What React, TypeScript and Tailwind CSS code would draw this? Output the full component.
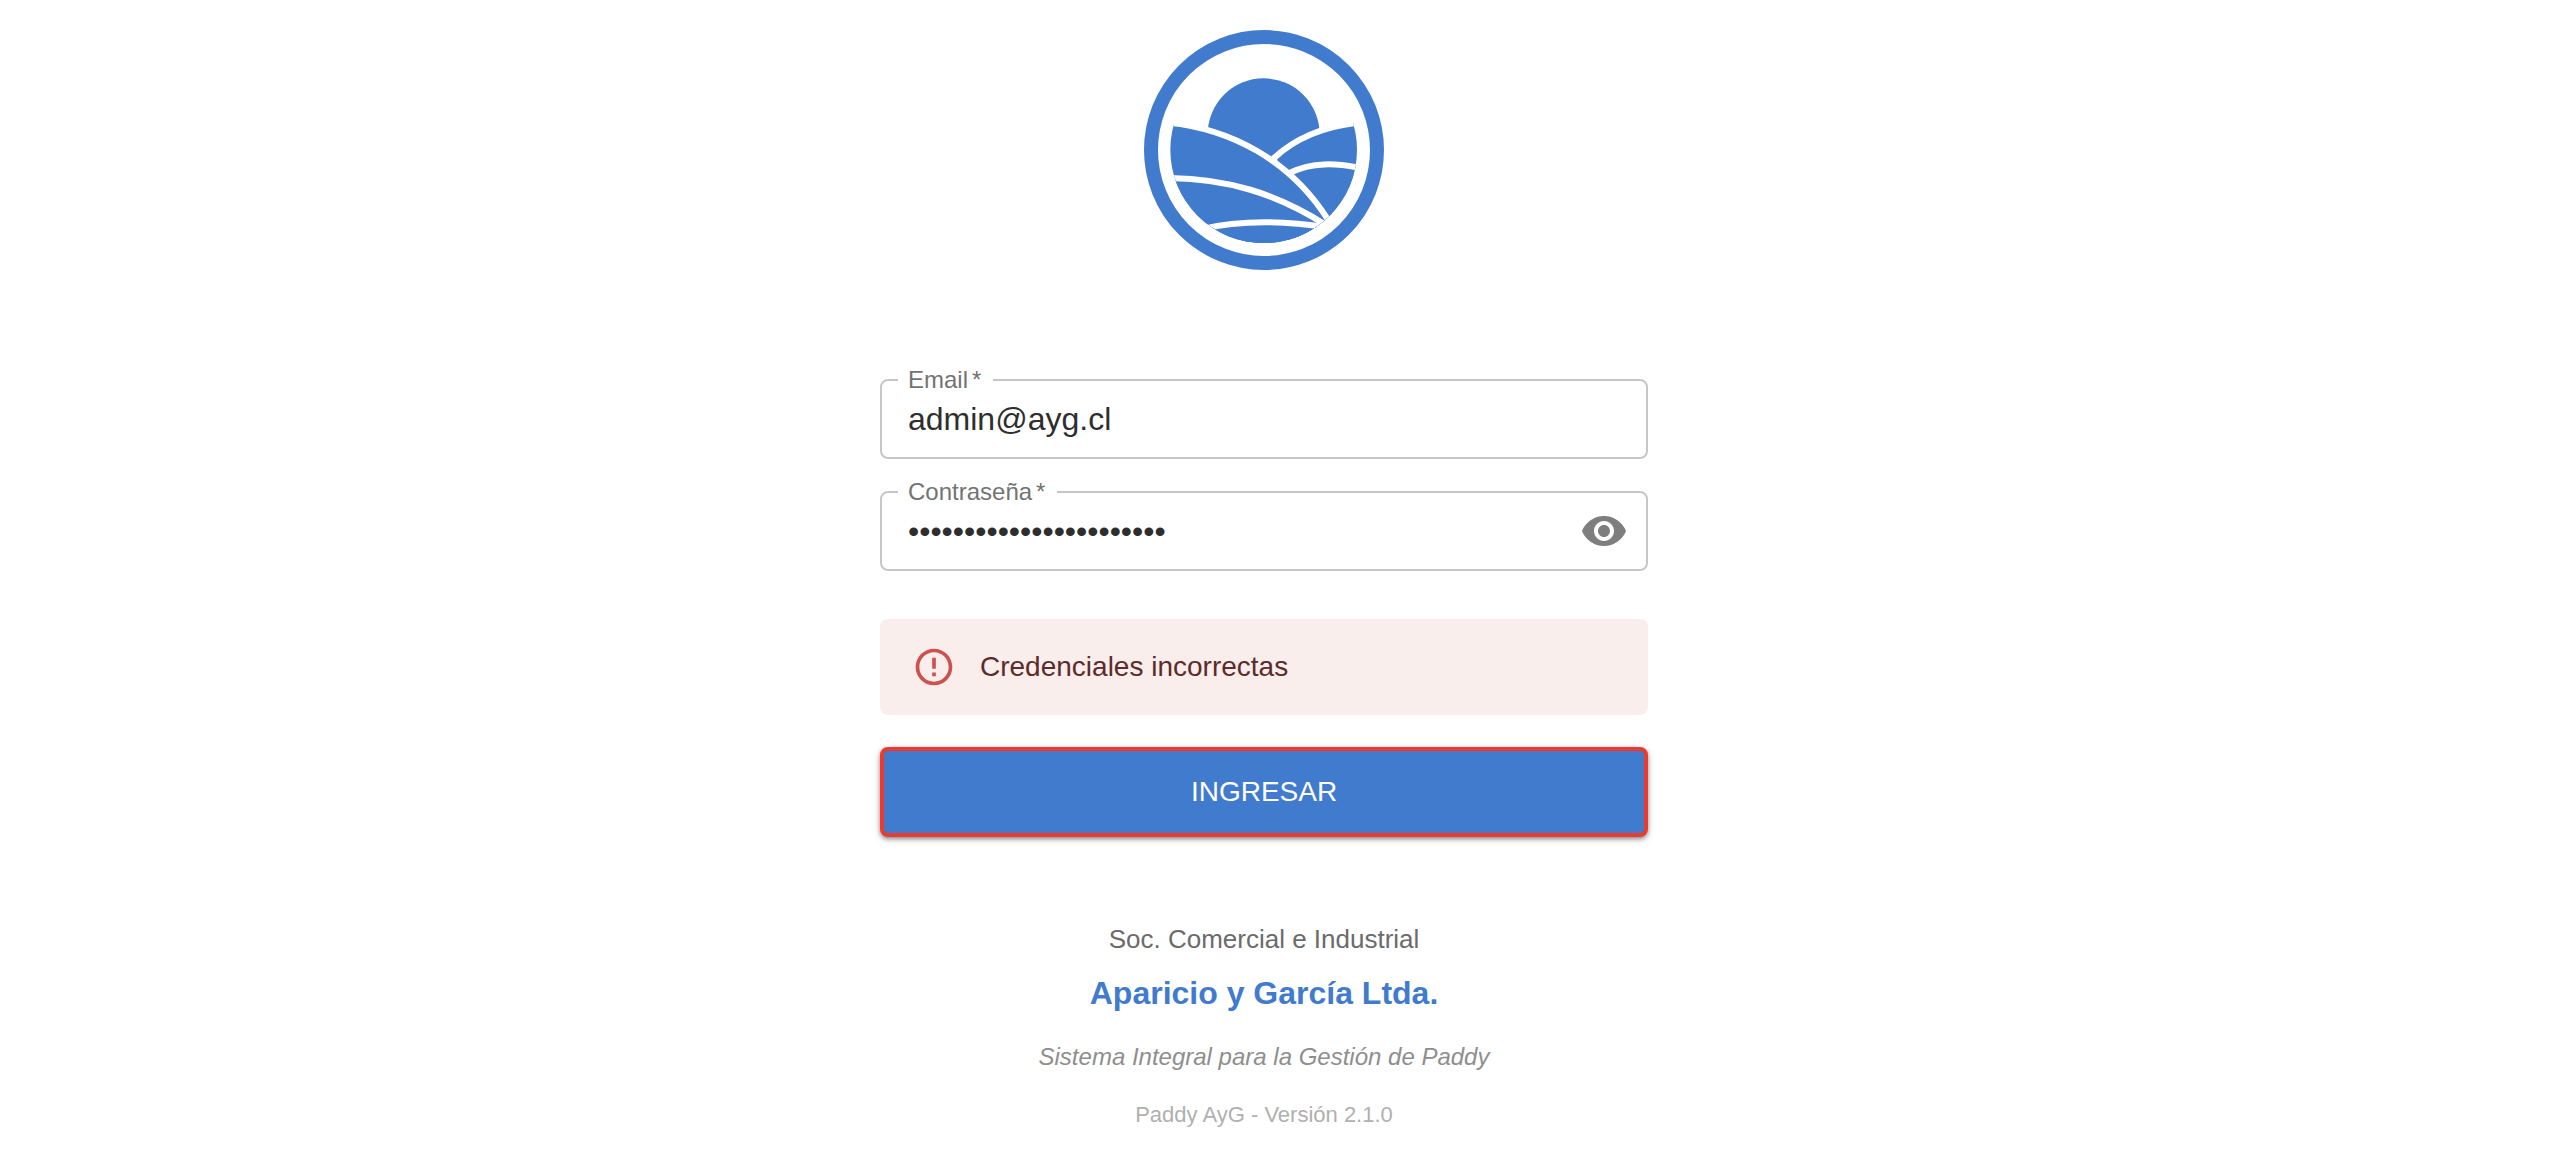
import { useState } from "react";
import type { ReactNode } from "react";

function Logo() {
  return (
    <svg viewBox="42 30 720 720" className="size-60" role="img" aria-label="Paddy AyG">
      <defs>
        <clipPath id="field">
          <circle cx="401" cy="389" r="280" />
        </clipPath>
      </defs>
      <circle cx="402" cy="390" r="339" fill="none" stroke="#417bce" strokeWidth="42" />
      <g clipPath="url(#field)" fill="#417bce" stroke="#fff" strokeWidth="18">
        <circle cx="401" cy="343" r="168" stroke="none" />
        <path d="M432 414C500 350 585 318 690 307L720 700L480 700Z" />
        <path d="M480 458C545 427 615 427 700 446L720 700L480 700Z" />
        <path d="M110 307C300 325 480 420 592 596L600 700L100 700Z" />
        <path d="M110 474C290 475 440 520 588 615L600 700L100 700Z" />
        <path d="M210 628C330 600 450 600 590 622L600 700L200 700Z" />
      </g>
    </svg>
  );
}

function Field({ id, label, children }: { id: string; label: string; children: ReactNode }) {
  return (
    <fieldset className="min-w-0 rounded-lg border-2 border-[#c6c6c6]">
      <legend className="ml-4 px-2.5 text-2xl leading-6 text-[#737373]">
        <label htmlFor={id} className="flex gap-1 pr-0.5">
          {label}
          <span aria-hidden="true">*</span>
        </label>
      </legend>
      <div className="flex h-[65px] items-start pr-[18px] pl-[26px]">{children}</div>
    </fieldset>
  );
}

const inputClass = "h-[54px] min-w-0 flex-1 bg-transparent text-[32px] text-[#2e2e2e] outline-none";

export default function App() {
  const [visible, setVisible] = useState(false);
  return (
    <main className="flex min-h-screen flex-col items-center bg-white pt-[30px] pr-8 font-['Liberation_Sans',Arial,sans-serif]">
      <Logo />
      <form className="mt-[98px] flex w-full max-w-3xl flex-col" onSubmit={(e) => e.preventDefault()}>
        <div className="flex flex-col gap-[21px]">
          <Field id="email" label="Email">
            <input id="email" type="email" required defaultValue="admin@ayg.cl" className={inputClass} />
          </Field>
          <Field id="password" label="Contraseña">
            <input
              id="password"
              type={visible ? "text" : "password"}
              required
              defaultValue="contrasena-de-ejemplo-1"
              className={inputClass}
            />
            <button
              type="button"
              aria-label="Mostrar contraseña"
              className="flex h-[54px] items-center text-[#7e7e7e]"
              onClick={() => setVisible(!visible)}
            >
              <svg viewBox="0 0 24 24" fill="currentColor" className="size-12">
                <path d="M12 4.5C7 4.5 2.730 7.610 1 12c1.730 4.390 6 7.500 11 7.500s9.270-3.110 11-7.500c-1.730-4.390-6-7.500-11-7.500zM12 17c-2.760 0-5-2.240-5-5s2.240-5 5-5 5 2.240 5 5-2.240 5-5 5zm0-8c-1.660 0-3 1.340-3 3s1.340 3 3 3 3-1.340 3-3-1.340-3-3-3z" />
              </svg>
            </button>
          </Field>
        </div>
        <div role="alert" className="mt-12 flex h-24 items-center gap-6 rounded-lg bg-[#faeeec] px-8 text-[28px] text-[#5c2b2a]">
          <svg viewBox="0 0 24 24" fill="#cb524e" className="size-11">
            <path d="M11 15h2v2h-2zm0-8h2v6h-2zm.990-5C6.470 2 2 6.480 2 12s4.470 10 9.990 10C17.520 22 22 17.520 22 12S17.520 2 11.990 2zM12 20c-4.420 0-8-3.580-8-8s3.580-8 8-8 8 3.580 8 8-3.580 8-8 8z" />
          </svg>
          Credenciales incorrectas
        </div>
        <button
          type="submit"
          className="mt-8 h-[90px] rounded-lg border-4 border-[#eb3a2f] bg-[#417bce] text-[28px] text-white shadow-[0_2px_4px_rgba(0,0,0,0.4),0_2px_10px_rgba(0,0,0,0.12)]"
        >
          INGRESAR
        </button>
      </form>
      <footer className="mt-[82px] flex flex-col items-center text-center">
        <p className="text-[26px] leading-10 text-[#6b6b6b]">Soc. Comercial e Industrial</p>
        <p className="mt-2.5 text-[32px] leading-[48px] font-bold text-[#417bce]">Aparicio y García Ltda.</p>
        <p className="mt-5 text-2xl leading-10 text-[#8e8e8e] italic">Sistema Integral para la Gestión de Paddy</p>
        <p className="mt-5 text-[22px] leading-9 text-[#b0b0b0]">Paddy AyG - Versión 2.1.0</p>
      </footer>
    </main>
  );
}
